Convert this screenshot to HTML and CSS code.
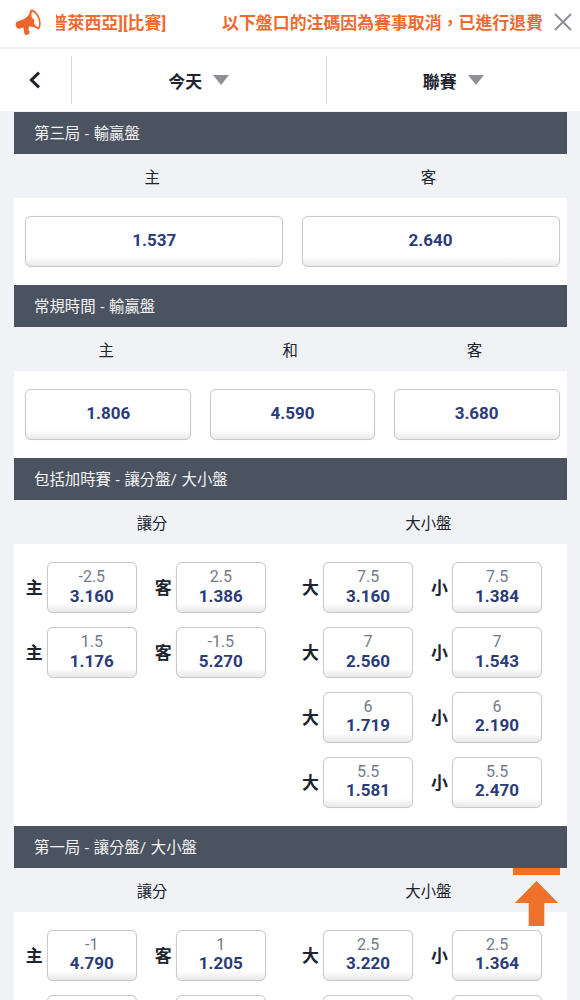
FILE: index.html
```html
<!DOCTYPE html>
<html lang="zh-Hant">
<head>
    <meta charset="UTF-8">
    <meta name="viewport" content="width=device-width, initial-scale=1.0">
    <title>今天 - 聯賽</title>
    <link rel="stylesheet" href="styles.css">
</head>
<body>
    <div class="notice">
        <svg class="horn" viewBox="0 0 27 27">
            <path d="M15.3 1.2 C14.5 5.5 12 9 8 10.4 L2.4 12.4 C.4 13.3 .2 16 1.2 17.8 C2 19.5 3.6 20 5 19.5 L8.4 18.6 L9.3 24 C9.6 25.8 11 26.3 12.3 25.8 L14.6 24.8 L14 23.2 L14.8 22.4 L13.4 20.8 L14 17.6 C17.5 17.4 20.5 18.6 23.3 20.6 C26.6 18.6 26.2 11.5 23.6 6.6 C21.3 2.2 17.6 -.8 15.3 1.2Z"/>
            <path class="horn-mouth" d="M17 3.2 C15.9 5 16.4 7.6 17.2 9.2 C19 9.2 20.2 12 18.9 13.7 C20 16 21.6 18 23 18.3 C24.8 16.5 24.4 11.8 22.3 7.8 C20.6 4.6 18.3 2.6 17 3.2Z"/>
        </svg>
        <div class="marquee">
            <span>普萊西亞][比賽]</span>
            <span>以下盤口的注碼因為賽事取消，已進行退費</span>
        </div>
        <svg class="close" viewBox="0 0 18 18"><path d="M1 1 L17 17 M17 1 L1 17"/></svg>
    </div>

    <div class="nav">
        <div class="back"><svg viewBox="0 0 12 18"><path d="M10 1.6 L2.4 9 L10 16.4"/></svg></div>
        <div class="tab">今天<i class="caret"></i></div>
        <div class="tab">聯賽<i class="caret"></i></div>
    </div>

    <div class="content">
        <div class="market">
            <h3>第三局 - 輸贏盤</h3>
            <div class="cols"><span>主</span><span>客</span></div>
            <div class="single">
                <div class="odds"><b>1.537</b></div>
                <div class="odds"><b>2.640</b></div>
            </div>
        </div>

        <div class="market">
            <h3>常規時間 - 輸贏盤</h3>
            <div class="cols"><span>主</span><span>和</span><span>客</span></div>
            <div class="single">
                <div class="odds"><b>1.806</b></div>
                <div class="odds"><b>4.590</b></div>
                <div class="odds"><b>3.680</b></div>
            </div>
        </div>

        <div class="market">
            <h3>包括加時賽 - 讓分盤/ 大小盤</h3>
            <div class="cols"><span>讓分</span><span>大小盤</span></div>
            <div class="double">
                <div class="half">
                    <label>主</label><div class="odds"><span>-2.5</span><b>3.160</b></div>
                    <label>客</label><div class="odds"><span>2.5</span><b>1.386</b></div>
                    <label>主</label><div class="odds"><span>1.5</span><b>1.176</b></div>
                    <label>客</label><div class="odds"><span>-1.5</span><b>5.270</b></div>
                </div>
                <div class="half">
                    <label>大</label><div class="odds"><span>7.5</span><b>3.160</b></div>
                    <label>小</label><div class="odds"><span>7.5</span><b>1.384</b></div>
                    <label>大</label><div class="odds"><span>7</span><b>2.560</b></div>
                    <label>小</label><div class="odds"><span>7</span><b>1.543</b></div>
                    <label>大</label><div class="odds"><span>6</span><b>1.719</b></div>
                    <label>小</label><div class="odds"><span>6</span><b>2.190</b></div>
                    <label>大</label><div class="odds"><span>5.5</span><b>1.581</b></div>
                    <label>小</label><div class="odds"><span>5.5</span><b>2.470</b></div>
                </div>
            </div>
        </div>

        <div class="market">
            <h3>第一局 - 讓分盤/ 大小盤</h3>
            <div class="cols"><span>讓分</span><span>大小盤</span></div>
            <div class="double">
                <div class="half">
                    <label>主</label><div class="odds"><span>-1</span><b>4.790</b></div>
                    <label>客</label><div class="odds"><span>1</span><b>1.205</b></div>
                    <label></label><div class="odds"></div>
                    <label></label><div class="odds"></div>
                </div>
                <div class="half">
                    <label>大</label><div class="odds"><span>2.5</span><b>3.220</b></div>
                    <label>小</label><div class="odds"><span>2.5</span><b>1.364</b></div>
                    <label></label><div class="odds"></div>
                    <label></label><div class="odds"></div>
                </div>
            </div>
        </div>
    </div>

    <!-- back to top -->
    <svg class="to-top" viewBox="0 0 47 58">
        <path d="M0 0 H47 V7 H0Z M23.5 13 L45.2 35 H31.3 V58 H15.7 V35 H1.8Z"/>
    </svg>
</body>
</html>
```

FILE: styles.css
```css
* {
    box-sizing: border-box;
}
body {
    margin: 0;
    height: 1000px;
    overflow: hidden;
    background: #f0f2f6;
    font-family: Roboto, "Noto Sans CJK TC", sans-serif;
    color: #20242e;
}
.notice {
    display: flex;
    align-items: center;
    height: 49px;
    padding: 0 8px 3px 15px;
    background: #fff;
    border-bottom: 2px solid #f1f1f2;
}
.horn {
    width: 27px;
    height: 27px;
    fill: #ee652b;
}
.horn-mouth {
    fill: #fff;
}
.marquee {
    display: flex;
    justify-content: flex-end;
    gap: 56px;
    width: 487px;
    margin-left: 14px;
    padding-top: 2px;
    overflow: hidden;
    white-space: nowrap;
    color: #f06a30;
    font-size: 16.9px;
    font-weight: bold;
    line-height: 24px;
}
.close {
    width: 18px;
    height: 18px;
    margin-left: 11px;
    fill: none;
    stroke: #8d8f96;
    stroke-width: 2;
}
.nav {
    display: flex;
    align-items: center;
    height: 62px;
    background: #fff;
}
.back {
    display: flex;
    align-items: center;
    width: 71px;
    padding-left: 29px;
}
.back svg {
    width: 12px;
    height: 18px;
    fill: none;
    stroke: #20242a;
    stroke-width: 3;
}
.tab {
    display: flex;
    flex: 1;
    align-items: center;
    justify-content: center;
    height: 48px;
    border-left: 1px solid #d9d9db;
    font-size: 16.9px;
    font-weight: bold;
}
.caret {
    margin-left: 11px;
    border: 8.5px solid transparent;
    border-top: 10px solid #8f9096;
    border-bottom: 0;
}
.content {
    width: 552.5px;
    margin: 1px 0 0 14px;
}
.market h3 {
    height: 42.3px;
    margin: 0;
    padding: 1px 0 0 20px;
    background: #4c5360;
    color: #f1f2f4;
    font-size: 15.4px;
    font-weight: normal;
    line-height: 43px;
    word-spacing: 0.8px;
}
.cols {
    display: flex;
    height: 43.8px;
    padding-top: 1px;
    font-size: 15.4px;
    line-height: 46px;
}
.cols span {
    flex: 1;
    text-align: center;
}
.single {
    display: flex;
    gap: 18.4px;
    padding: 18px 7px 18px 11.4px;
    background: #fff;
}
.single .odds {
    flex: 1;
}
.odds {
    display: flex;
    flex-direction: column;
    align-items: center;
    justify-content: center;
    height: 51px;
    padding-bottom: 2px;
    border: 1px solid #c9c9cb;
    border-radius: 6px;
    background: linear-gradient(#fff 82%, #e8e8e9);
    box-shadow: 0 0 1px #cfcfd1;
    color: #2b3c78;
    font-size: 17px;
    line-height: 19.5px;
}
.odds span {
    color: #74798a;
    font-size: 16px;
}
.odds b {
    font-weight: bold;
}
.double {
    display: grid;
    grid-template-columns: 1fr 1fr;
    padding: 18px 0;
    background: #fff;
}
.half {
    display: grid;
    grid-template-columns: 21px 90px 18px 21px 90px;
    row-gap: 13.8px;
    align-content: start;
    padding-left: 11.8px;
}
/* the third column is the space between the two pairs */
.half label:nth-of-type(even) {
    grid-column: 4;
}
.half label {
    font-size: 16.9px;
    font-weight: bold;
    line-height: 52px;
    height: 51px;
}
.to-top {
    position: fixed;
    top: 868px;
    left: 513px;
    width: 47px;
    height: 58px;
    fill: #ee712c;
}
```
